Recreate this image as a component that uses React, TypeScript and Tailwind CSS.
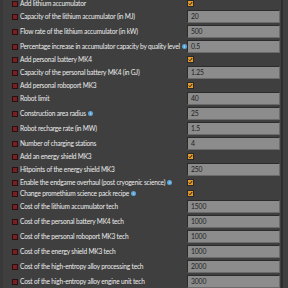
import React from "react";

type Row = { label: string; kind: "cb" | "tb"; value?: string; info?: boolean };

const rows: Row[] = [
  { label: "Add lithium accumulator", kind: "cb" },
  { label: "Capacity of the lithium accumulator (in MJ)", kind: "tb", value: "20" },
  { label: "Flow rate of the lithium accumulator (in kW)", kind: "tb", value: "500" },
  { label: "Percentage increase in accumulator capacity by quality level", kind: "tb", value: "0.5", info: true },
  { label: "Add personal battery MK4", kind: "cb" },
  { label: "Capacity of the personal battery MK4 (in GJ)", kind: "tb", value: "1.25" },
  { label: "Add personal roboport MK3", kind: "cb" },
  { label: "Robot limit", kind: "tb", value: "40" },
  { label: "Construction area radius", kind: "tb", value: "25", info: true },
  { label: "Robot recharge rate (in MW)", kind: "tb", value: "1.5" },
  { label: "Number of charging stations", kind: "tb", value: "4" },
  { label: "Add an energy shield MK3", kind: "cb" },
  { label: "Hitpoints of the energy shield MK3", kind: "tb", value: "250" },
  { label: "Enable the endgame overhaul (post cryogenic science)", kind: "cb", info: true },
  { label: "Change promethium science pack recipe", kind: "cb", info: true },
  { label: "Cost of the lithium accumulator tech", kind: "tb", value: "1500" },
  { label: "Cost of the personal battery MK4 tech", kind: "tb", value: "1000" },
  { label: "Cost of the personal roboport MK3 tech", kind: "tb", value: "1000" },
  { label: "Cost of the energy shield MK3 tech", kind: "tb", value: "1000" },
  { label: "Cost of the high-entropy alloy processing tech", kind: "tb", value: "2000" },
  { label: "Cost of the high-entropy alloy engine unit tech", kind: "tb", value: "3000" },
];

function Info() {
  return (
    <span className="ml-[2px] inline-flex h-[5px] w-[5px] shrink-0 items-center justify-center rounded-full bg-[#5aa6dc] text-[4px] leading-none text-white">
      i
    </span>
  );
}

function Check() {
  return (
    <div className="flex h-[7px] w-[7px] items-center justify-center border border-[#2a2a2a] bg-[#e39a2c]">
      <svg width="5" height="5" viewBox="0 0 5 5">
        <path d="M0.8 2.6 L2 3.8 L4.2 1" stroke="#2a1a08" strokeWidth="1" fill="none" />
      </svg>
    </div>
  );
}

export default function App() {
  return (
    <div
      className="relative h-[288px] w-[288px] overflow-hidden bg-[#3f3f3f]"
      style={{ fontFamily: "Lato, 'Open Sans', sans-serif" }}
    >
      <div className="absolute left-0 top-0 h-full w-[3px] bg-[#393939]" />
      <div className="absolute right-[5px] top-0 h-full w-[2px] bg-[#2e2e2e]" />
      <div className="mt-[-1px] flex flex-col gap-[2px] pl-[12px]">
        {rows.map((r, i) => (
          <div
            key={i}
            className={`flex items-center ${r.kind === "tb" ? "h-[13px]" : "h-[9px]"}`}
          >
            <div className="flex w-[175px] min-w-0 items-center overflow-hidden">
              <div className="h-[6px] w-[6px] shrink-0 border border-[#2a1010] bg-[#7a1f22]" />
              <span className="ml-[2px] whitespace-nowrap text-[6.6px] leading-none tracking-[-0.2px] text-[#ececec]">
                {r.label}
              </span>
              {r.info && <Info />}
            </div>
            {r.kind === "tb" ? (
              <div className="flex h-[13px] w-[93px] items-center border-t border-l border-[#2b2b2b] border-b-[#6a6a6a] border-r-[#6a6a6a] border-b border-r bg-[#8c8c8c] pl-[3px] text-[6.8px] leading-none tracking-[-0.15px] text-[#1f1f1f]">
                {r.value}
              </div>
            ) : (
              <Check />
            )}
          </div>
        ))}
      </div>
    </div>
  );
}
